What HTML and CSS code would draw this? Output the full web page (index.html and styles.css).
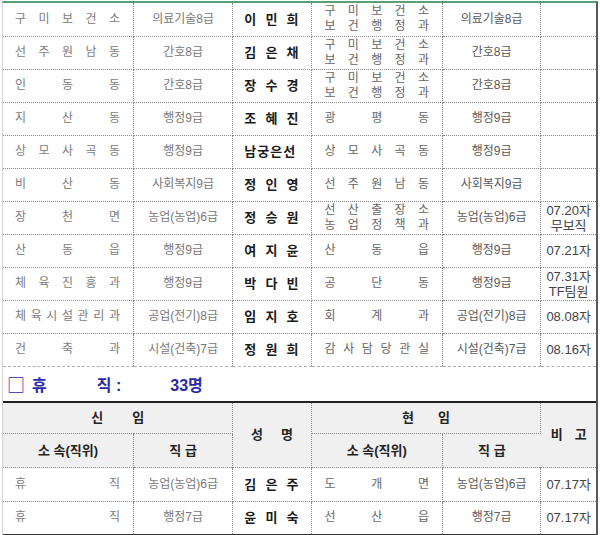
FILE: index.html
```html
<!DOCTYPE html>
<html lang="ko">
<head>
<meta charset="utf-8">
<title>인사발령</title>
<link rel="stylesheet" href="styles.css">
</head>
<body>
<div class="page">
  <table class="list">
    <colgroup><col class="c1"><col class="c2"><col class="c3"><col class="c4"><col class="c5"><col class="c6"></colgroup>
    <tbody>
      <tr><td class="org">구 미 보 건 소</td><td class="grd">의료기술8급</td><td class="nm">이 민 희</td><td class="org2">구 미 보 건 소<br>보 건 행 정 과</td><td class="grd2">의료기술8급</td><td class="rmk"></td></tr>
      <tr><td class="org">선 주 원 남 동</td><td class="grd">간호8급</td><td class="nm">김 은 채</td><td class="org2">구 미 보 건 소<br>보 건 행 정 과</td><td class="grd2">간호8급</td><td class="rmk"></td></tr>
      <tr><td class="org">인 동 동</td><td class="grd">간호8급</td><td class="nm">장 수 경</td><td class="org2">구 미 보 건 소<br>보 건 행 정 과</td><td class="grd2">간호8급</td><td class="rmk"></td></tr>
      <tr><td class="org">지 산 동</td><td class="grd">행정9급</td><td class="nm">조 혜 진</td><td class="org2">광 평 동</td><td class="grd2">행정9급</td><td class="rmk"></td></tr>
      <tr><td class="org">상 모 사 곡 동</td><td class="grd">행정9급</td><td class="nm tight">남궁은선</td><td class="org2">상 모 사 곡 동</td><td class="grd2">행정9급</td><td class="rmk"></td></tr>
      <tr><td class="org">비 산 동</td><td class="grd">사회복지9급</td><td class="nm">정 인 영</td><td class="org2">선 주 원 남 동</td><td class="grd2">사회복지9급</td><td class="rmk"></td></tr>
      <tr><td class="org">장 천 면</td><td class="grd">농업(농업)6급</td><td class="nm">정 승 원</td><td class="org2">선 산 출 장 소<br>농 업 정 책 과</td><td class="grd2">농업(농업)6급</td><td class="rmk">07.20자<br>무보직</td></tr>
      <tr><td class="org">산 동 읍</td><td class="grd">행정9급</td><td class="nm">여 지 윤</td><td class="org2">산 동 읍</td><td class="grd2">행정9급</td><td class="rmk">07.21자</td></tr>
      <tr><td class="org">체 육 진 흥 과</td><td class="grd">행정9급</td><td class="nm">박 다 빈</td><td class="org2">공 단 동</td><td class="grd2">행정9급</td><td class="rmk">07.31자<br>TF팀원</td></tr>
      <tr><td class="org">체 육 시 설 관 리 과</td><td class="grd">공업(전기)8급</td><td class="nm">임 지 호</td><td class="org2">회 계 과</td><td class="grd2">공업(전기)8급</td><td class="rmk">08.08자</td></tr>
      <tr><td class="org">건 축 과</td><td class="grd">시설(건축)7급</td><td class="nm">정 원 희</td><td class="org2">감 사 담 당 관 실</td><td class="grd2">시설(건축)7급</td><td class="rmk">08.16자</td></tr>
    </tbody>
  </table>

  <div class="title">
    <span class="t-box">□</span><span class="t-a">휴</span><span class="t-b">직 :</span><span class="t-c">33명</span>
  </div>

  <table class="leave">
    <colgroup><col class="c1"><col class="c2"><col class="c3"><col class="c4"><col class="c5"><col class="c6"></colgroup>
    <thead>
      <tr class="h1">
        <th colspan="2"><span class="sp w53">신 임</span></th>
        <th rowspan="2"><span class="sp w42">성 명</span></th>
        <th colspan="2"><span class="sp w48">현 임</span></th>
        <th rowspan="2"><span class="sp w36">비 고</span></th>
      </tr>
      <tr class="h2">
        <th>소 속(직위)</th>
        <th>직 급</th>
        <th>소 속(직위)</th>
        <th>직 급</th>
      </tr>
    </thead>
    <tbody>
      <tr><td class="org">휴 직</td><td class="grd">농업(농업)6급</td><td class="nm">김 은 주</td><td class="org2">도 개 면</td><td class="grd2">농업(농업)6급</td><td class="rmk">07.17자</td></tr>
      <tr><td class="org">휴 직</td><td class="grd">행정7급</td><td class="nm">윤 미 숙</td><td class="org2">선 산 읍</td><td class="grd2">행정7급</td><td class="rmk">07.17자</td></tr>
    </tbody>
  </table>
</div>
</body>
</html>
```

FILE: styles.css
```css
* { box-sizing: border-box; }

body {
  margin: 0;
  background: #ffffff;
  font-family: "Liberation Sans", "Noto Sans CJK KR", sans-serif;
}

.page {
  margin: 1px 0 0 2px;
  width: 596px;
  border-top: 2px solid #5c9f72;
  border-left: 1px solid #d4d4d4;
  border-right: 2px solid #5a5a5a;
}

table {
  border-collapse: collapse;
  table-layout: fixed;
  width: 593px;
}

col.c1 { width: 130px; }
col.c2 { width: 99px; }
col.c3 { width: 78px; }
col.c4 { width: 131px; }
col.c5 { width: 98px; }
col.c6 { width: 55px; }

td, th {
  padding: 0;
  border: 1px dotted #8a8a8a;
  font-size: 12px;
  line-height: 15px;
  font-weight: normal;
  vertical-align: middle;
  white-space: nowrap;
}

td:first-child, th:first-child { border-left: hidden; }
td:last-child, th:last-child { border-right: hidden; }

.list tr:first-child td { border-top: hidden; }
.list tr td { height: 33px; }
.list tr:last-child td { border-bottom: 1px dashed #b0b0b0; }

.org {
  padding: 0 13px 0 12px;
  text-align: justify;
  text-align-last: justify;
  color: #7c7c7c;
}

.org2 {
  padding: 0 13px 0 13px;
  text-align: justify;
  text-align-last: justify;
  color: #666666;
}

.grd {
  text-align: center;
  color: #777777;
}

.grd2 {
  text-align: center;
  color: #5a5a5a;
}

.nm {
  padding: 0 12px 0 11px;
  text-align: justify;
  text-align-last: justify;
  font-size: 13px;
  font-weight: bold;
  color: #1a1a1a;
}

.nm.tight {
  letter-spacing: 1px;
}

.rmk {
  text-align: center;
  color: #444444;
  font-size: 13px;
}

.title {
  height: 34px;
  display: flex;
  align-items: center;
  padding-left: 4px;
  color: #2a2aa8;
  font-size: 16px;
  font-weight: bold;
}

.t-box {
  font-family: "Noto Sans CJK KR", sans-serif;
  font-weight: normal;
  font-size: 18px;
}
.t-a { margin-left: 7px; }
.t-b { margin-left: 50px; }
.t-c { margin-left: 49px; }

.leave thead tr:first-child th { border-top: 2px solid #222222; }
.leave th {
  background: #f0f0f0;
  font-size: 13px;
  font-weight: bold;
  color: #222222;
  text-align: center;
}
.leave tr.h1 th { height: 32px; }
.leave tr.h2 th { height: 34px; }
.leave tbody td { height: 34px; }
.leave tbody tr:last-child td { border-bottom: 2px solid #333333; height: 33px; }

.sp {
  display: inline-block;
  text-align: justify;
  text-align-last: justify;
}
.w53 { width: 53px; }
.w48 { width: 48px; }
.w42 { width: 42px; }
.w36 { width: 36px; }
```
